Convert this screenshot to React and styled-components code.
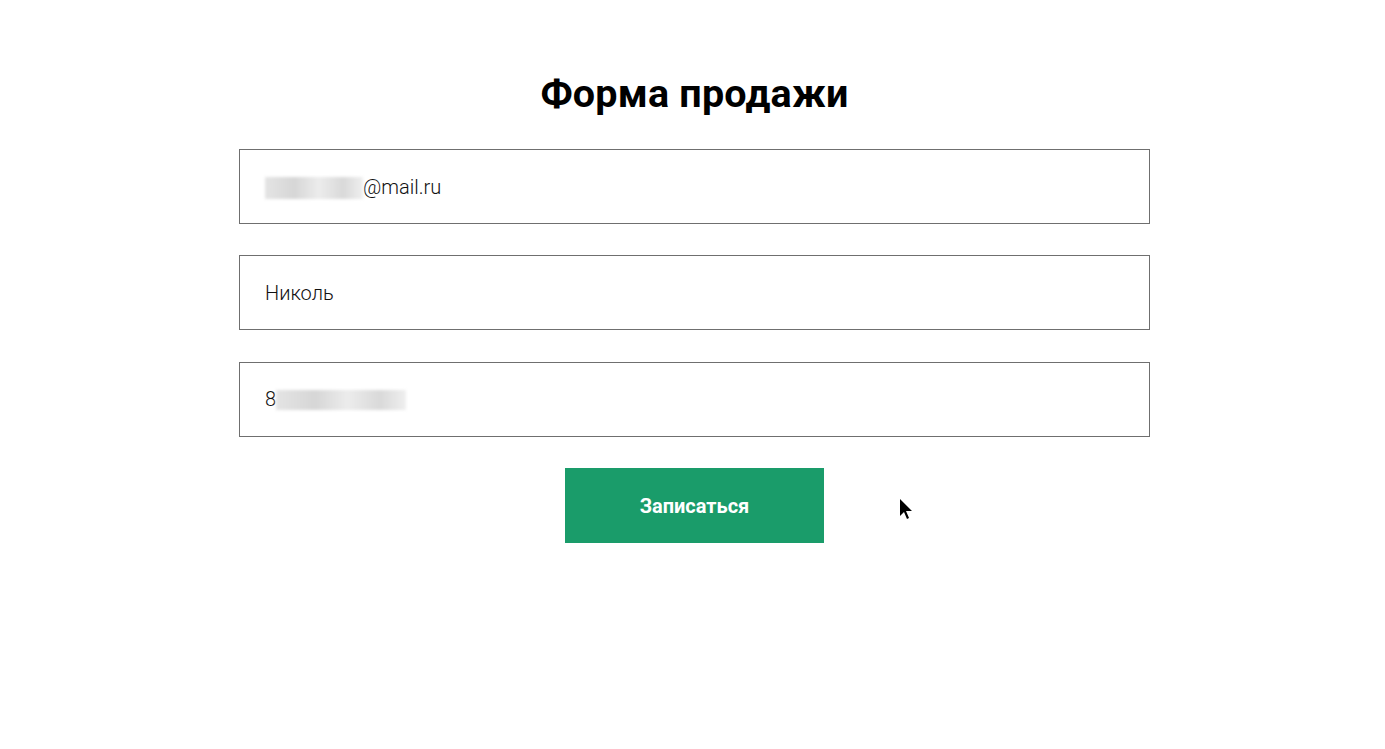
import React from "react";
import styled, { createGlobalStyle } from "styled-components";

const GlobalStyle = createGlobalStyle`
  html, body {
    margin: 0;
    padding: 0;
    background: #fff;
    font-family: Roboto, "Liberation Sans", sans-serif;
  }
`;

const Page = styled.div`
  position: relative;
  width: 100%;
  height: 749px;
  box-sizing: border-box;
  padding-left: 4px;
  display: flex;
  justify-content: center;
`;

const Form = styled.form`
  width: 911px;
  margin-top: 70px;
  display: flex;
  flex-direction: column;
  align-items: center;
`;

const Title = styled.h2`
  margin: 0 0 31px;
  font-size: 39.5px;
  line-height: 48px;
  font-weight: 700;
  color: #000;
  letter-spacing: 0.2px;
`;

const Field = styled.div`
  box-sizing: border-box;
  width: 100%;
  height: 75px;
  margin-bottom: 31.4px;
  border: 1px solid #6f6f6f;
  padding: 0 25px;
  display: flex;
  align-items: center;
  font-size: 20px;
  font-weight: 300;
  color: #111;
`;

const Blur = styled.span`
  display: inline-block;
  width: ${(p) => p.w}px;
  height: ${(p) => p.h}px;
  background: linear-gradient(90deg, #e4e4e4, #d6d6d6 30%, #ececec 55%, #d9d9d9 80%, #efefef);
  filter: blur(1.5px);
  margin-top: ${(p) => p.top || 0}px;
`;

const Submit = styled.button`
  width: 259px;
  height: 75px;
  border: none;
  background: #1a9c6a;
  color: #fff;
  font-family: Roboto, "Liberation Sans", sans-serif;
  font-size: 20px;
  font-weight: 700;
  cursor: pointer;
`;

const Cursor = styled.svg`
  position: absolute;
  left: 899px;
  top: 498px;
`;

export default function App() {
  return (
    <Page>
      <GlobalStyle />
      <Form onSubmit={(e) => e.preventDefault()}>
        <Title>Форма продажи</Title>
        <Field>
          <Blur w={98} h={22} top={2} />
          @mail.ru
        </Field>
        <Field>Николь</Field>
        <Field>
          8<Blur w={130} h={20} top={1} />
        </Field>
        <Submit type="submit">Записаться</Submit>
      </Form>
      <Cursor width="16" height="24" viewBox="0 0 16 24">
        <path d="M1 1 L1 18 L5 14 L8 21 L10 20 L7 13 L13 13 Z" fill="#000" />
      </Cursor>
    </Page>
  );
}
